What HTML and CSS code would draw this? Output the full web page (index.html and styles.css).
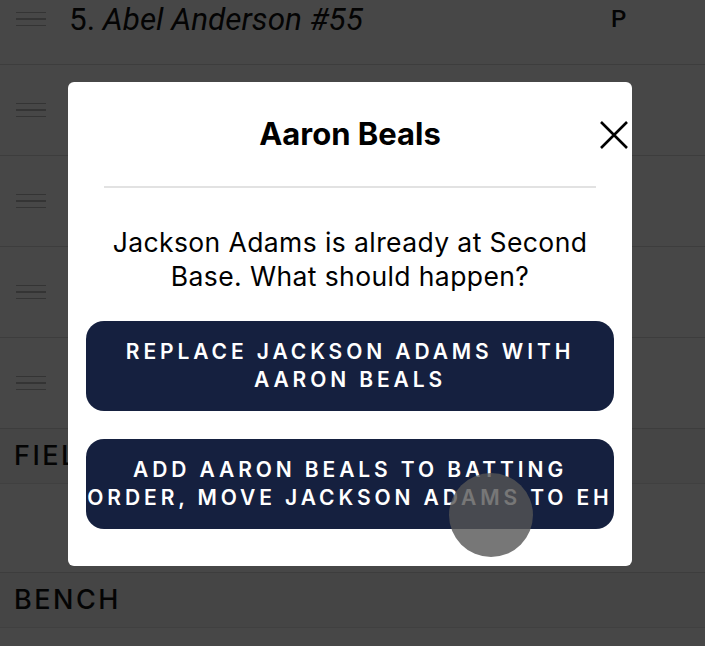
FILE: index.html
```html
<!DOCTYPE html>
<html lang="en">
<head>
<meta charset="UTF-8">
<meta name="viewport" content="width=device-width, initial-scale=1.0">
<title>Lineup</title>
<link rel="stylesheet" href="styles.css">
</head>
<body>
<div class="lineup">
<div class="row first">
<span class="handle"><i></i><i></i><i></i></span>
<span class="name">5. <em>Abel Anderson #55</em></span>
<span class="pos">P</span>
</div>
<div class="row">
<span class="handle"><i></i><i></i><i></i></span>
<span class="name">6. <em>Jackson Adams #12</em></span>
<span class="pos">S</span>
</div>
<div class="row">
<span class="handle"><i></i><i></i><i></i></span>
<span class="name">7. <em>Liam Brooks #3</em></span>
<span class="pos">C</span>
</div>
<div class="row">
<span class="handle"><i></i><i></i><i></i></span>
<span class="name">8. <em>Owen Carter #21</em></span>
<span class="pos">S</span>
</div>
<div class="row">
<span class="handle"><i></i><i></i><i></i></span>
<span class="name">9. <em>Miles Dunn #8</em></span>
<span class="pos">S</span>
</div>
<div class="section">FIELDING ONLY</div>
<div class="row empty"></div>
<div class="section">BENCH</div>
</div>

<div class="overlay">
<div class="modal">
<div class="modal-head">
<h2>Aaron Beals</h2>
<button class="close" aria-label="Close">
<svg width="30" height="30" viewBox="0 0 30 30"><path d="M2 2 L28 28 M28 2 L2 28" stroke="#000" stroke-width="2.6" fill="none"/></svg>
</button>
</div>
<hr class="divider">
<p class="message">Jackson Adams is already at Second<br>Base. What should happen?</p>
<button class="choice">Replace Jackson Adams with<br>Aaron Beals</button>
<button class="choice">Add Aaron Beals to batting<br>order, move Jackson Adams to EH</button>
</div>
<div class="touch"></div>
</div>
</body>
</html>
```

FILE: styles.css
```css
html, body {
height: 100%;
}
body {
margin: 0;
font-family: Inter, "Liberation Sans", sans-serif;
background-color: #fff;
overflow: hidden;
}
.lineup {
margin-top: -26px;
}
.row {
display: flex;
align-items: center;
height: 90px;
border-bottom: 1px solid #dcdcdc;
}
.row.empty {
height: 88px;
}
.handle {
display: flex;
flex-direction: column;
gap: 5px;
width: 30px;
margin: 0 23px 0 16px;
}
.handle i {
display: block;
height: 1.5px;
background-color: #bcbcbc;
}
.name {
flex: 1;
font-family: Roboto, "Liberation Sans", sans-serif;
font-size: 31.5px;
color: #111;
}
.pos {
width: 50px;
font-family: Roboto, "Liberation Sans", sans-serif;
font-size: 24px;
font-weight: 500;
color: #111;
margin-right: 44px;
}
.section {
height: 54px;
line-height: 54px;
padding-left: 14px;
font-size: 27px;
font-weight: 500;
letter-spacing: 2.5px;
color: #111;
background-color: #f6f6f6;
border-bottom: 1px solid #e4e4e4;
}
.overlay {
position: fixed;
inset: 0;
background-color: rgba(0, 0, 0, 0.72);
padding: 82px 0 0 68px;
}
.modal {
position: relative;
width: 528px;
padding: 0 18px 37px;
background-color: #fff;
border-radius: 6px;
}
.modal-head {
padding-top: 34px;
}
.modal-head h2 {
margin: 0;
height: 36px;
line-height: 36px;
font-size: 31px;
font-weight: 700;
text-align: center;
color: #000;
}
.close {
position: absolute;
top: 38px;
right: 3px;
padding: 0;
border: none;
background: none;
line-height: 0;
}
.divider {
margin: 34px 18px 0;
border: none;
height: 2px;
background-color: #e2e2e2;
}
.message {
margin: 37px 0 28px;
font-size: 26.5px;
letter-spacing: 0.4px;
line-height: 34px;
text-align: center;
white-space: nowrap;
color: #000;
}
.choice {
display: block;
width: 100%;
height: 90px;
padding: 0;
margin-bottom: 28px;
border: none;
border-radius: 18px;
background-color: #15203f;
color: #fff;
font-family: Inter, "Liberation Sans", sans-serif;
font-size: 21px;
font-weight: 600;
letter-spacing: 3.9px;
line-height: 28px;
text-transform: uppercase;
white-space: nowrap;
overflow: hidden;
}
.choice:last-child {
margin-bottom: 0;
}
.touch {
position: absolute;
left: 449px;
top: 473px;
width: 84px;
height: 84px;
border-radius: 50%;
background-color: rgba(85, 85, 85, 0.8);
}
```
